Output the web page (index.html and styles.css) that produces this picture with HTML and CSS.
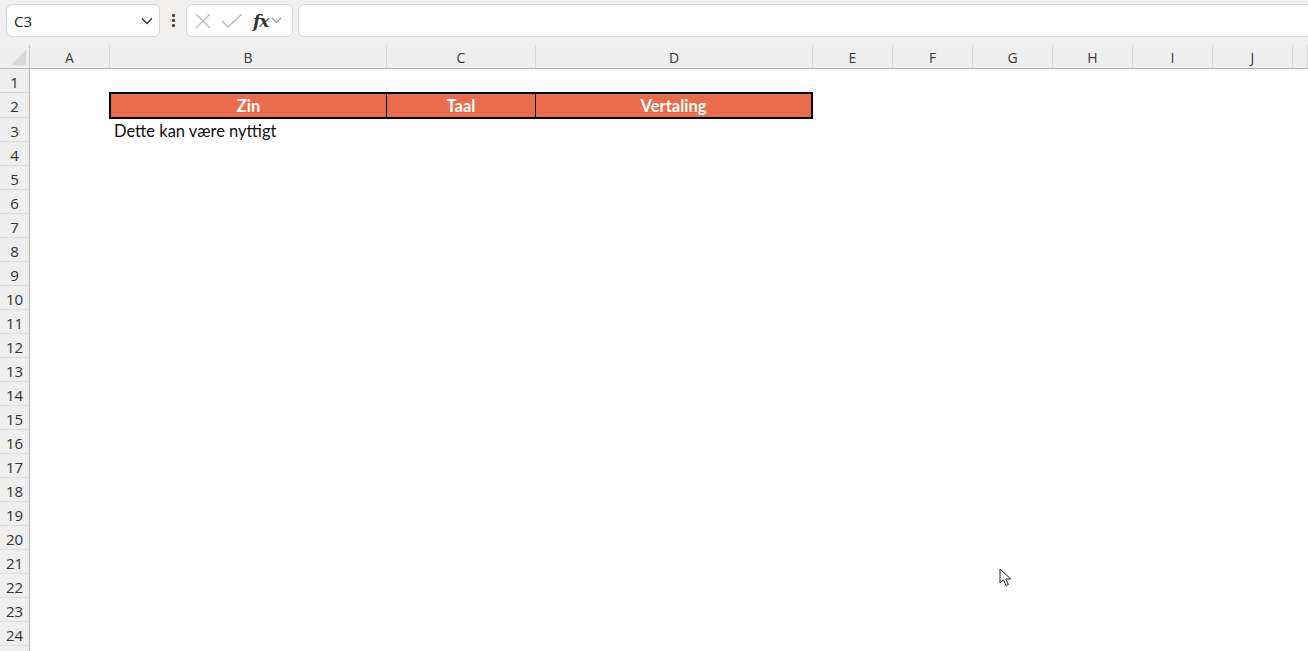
FILE: index.html
```html
<!DOCTYPE html>
<html lang="nl">
<head>
    <meta charset="UTF-8">
    <title>Blad1 - Excel</title>
    <link rel="stylesheet" href="styles.css">
</head>
<body>

<div class="formula-bar">
    <div class="name-box">
        <span>C3</span>
        <svg class="chev" width="12" height="8" viewBox="0 0 12 8"><path d="M1 1.5 L6 6.5 L11 1.5" fill="none" stroke="#333" stroke-width="1.4"/></svg>
    </div>
    <div class="dots"><i></i><i></i><i></i></div>
    <div class="fx-box">
        <svg width="18" height="18" viewBox="0 0 18 18"><path d="M2 2 L16 16 M16 2 L2 16" stroke="#bdbdbd" stroke-width="1.4"/></svg>
        <svg width="22" height="18" viewBox="0 0 22 18"><path d="M1 9 L7 15 L21 2" fill="none" stroke="#bdbdbd" stroke-width="1.4"/></svg>
        <span class="fx">fx</span>
        <svg width="11" height="7" viewBox="0 0 11 7"><path d="M1 1 L5.5 5.5 L10 1" fill="none" stroke="#9a9a9a" stroke-width="1.2"/></svg>
    </div>
    <div class="formula-input"></div>
</div>

<div class="col-heads">
    <div class="corner"><span class="tri"></span></div>
    <div class="ch w80">A</div>
    <div class="ch w277">B</div>
    <div class="ch w149">C</div>
    <div class="ch w277">D</div>
    <div class="ch w80">E</div>
    <div class="ch w80">F</div>
    <div class="ch w80">G</div>
    <div class="ch w80">H</div>
    <div class="ch w80">I</div>
    <div class="ch w80">J</div>
    <div class="ch rest"></div>
</div>

<div class="sheet">
    <div class="row-heads">
        <div class="rh">1</div>
        <div class="rh tall">2</div>
        <div class="rh">3</div>
        <div class="rh">4</div>
        <div class="rh">5</div>
        <div class="rh">6</div>
        <div class="rh">7</div>
        <div class="rh">8</div>
        <div class="rh">9</div>
        <div class="rh">10</div>
        <div class="rh">11</div>
        <div class="rh">12</div>
        <div class="rh">13</div>
        <div class="rh">14</div>
        <div class="rh">15</div>
        <div class="rh">16</div>
        <div class="rh">17</div>
        <div class="rh">18</div>
        <div class="rh">19</div>
        <div class="rh">20</div>
        <div class="rh">21</div>
        <div class="rh">22</div>
        <div class="rh">23</div>
        <div class="rh">24</div>
        <div class="rh"></div>
    </div>

    <div class="cells">
        <div class="tbl-head">
            <div class="th c-zin">Zin</div>
            <div class="th c-taal">Taal</div>
            <div class="th c-vert">Vertaling</div>
        </div>
        <div class="cell-text">Dette kan være nyttigt</div>

        <svg class="cursor" width="14" height="20" viewBox="0 0 14 20">
            <path d="M1 1 L1 15 L4.5 11.8 L7 17.5 L9.3 16.5 L6.9 11 L11.8 11 Z" fill="#fff" stroke="#222" stroke-width="1" stroke-linejoin="round"/>
        </svg>
    </div>
</div>

</body>
</html>
```

FILE: styles.css
```css
* {
    box-sizing: border-box;
}
body {
    margin: 0;
    background-color: #fff;
    font-family: "Open Sans", "Noto Sans", sans-serif;
    color: #222;
    overflow: hidden;
    height: 651px;
}

/* formula bar */
.formula-bar {
    display: flex;
    align-items: center;
    height: 45px;
    padding: 4px 0 8px 6px;
    background-color: #f1f0ef;
}
.name-box {
    display: flex;
    align-items: center;
    justify-content: space-between;
    width: 154px;
    height: 33px;
    padding: 0 6px 0 7px;
    background-color: #fff;
    border: 1px solid #d6d6d6;
    border-radius: 6px;
    font-size: 15px;
    color: #262626;
}
.dots {
    display: flex;
    flex-direction: column;
    gap: 2px;
    width: 26px;
    align-items: center;
}
.dots i {
    display: block;
    width: 3px;
    height: 3px;
    background-color: #444;
    border-radius: 1px;
}
.fx-box {
    display: flex;
    align-items: center;
    gap: 9px;
    width: 107px;
    height: 33px;
    padding: 0 0 0 7px;
    background-color: #fff;
    border: 1px solid #d6d6d6;
    border-radius: 6px;
}
.fx-box .fx {
    font-family: "DejaVu Serif", "Liberation Serif", serif;
    font-style: italic;
    font-weight: bold;
    font-size: 17px;
    color: #333;
    margin-left: 1px;
    margin-right: -6px;
    letter-spacing: -1px;
}
.formula-input {
    flex: 1;
    height: 33px;
    margin-left: 5px;
    margin-right: -8px;
    background-color: #fff;
    border: 1px solid #d6d6d6;
    border-radius: 6px;
}

/* column headers */
.col-heads {
    display: flex;
    height: 24px;
    background-color: #efefef;
    border-bottom: 1px solid #b4b4b4;
}
.corner {
    position: relative;
    width: 30px;
    border-right: 1px solid #c8c8c8;
}
.corner .tri {
    position: absolute;
    right: 3px;
    bottom: 3px;
    width: 0;
    height: 0;
    border-left: 15px solid transparent;
    border-bottom: 15px solid #d8d8d8;
}
.ch {
    display: flex;
    align-items: center;
    justify-content: center;
    font-size: 14px;
    color: #3a3a3a;
    border-right: 1px solid #d8d8d8;
    padding-top: 1px;
}
.w80 { width: 80px; }
.w149 { width: 149px; }
.w277 { width: 277px; }
.rest {
    flex: 1;
}

/* sheet body */
.sheet {
    display: flex;
}
.row-heads {
    width: 30px;
    background-color: #efefef;
    border-right: 1px solid #b4b4b4;
}
.rh {
    height: 24px;
    display: flex;
    align-items: center;
    justify-content: center;
    font-size: 15px;
    color: #333;
    border-bottom: 1px solid #dadada;
    padding-top: 2px;
}
.rh.tall {
    height: 25px;
}

.cells {
    position: relative;
    flex: 1;
    padding: 23px 0 0 79px;
}
.tbl-head {
    display: flex;
    width: 704px;
    height: 27px;
    border: 2px solid #000;
    background-color: #e96d4a;
}
.th {
    display: flex;
    align-items: center;
    justify-content: center;
    color: #fff;
    font-family: Lato, "Open Sans", sans-serif;
    font-weight: bold;
    font-size: 16.5px;
    padding-top: 1px;
}
.c-zin {
    width: 276px;
    border-right: 1px solid #000;
}
.c-taal {
    width: 149px;
    border-right: 1px solid #000;
}
.c-vert {
    width: 275px;
}
.cell-text {
    height: 24px;
    line-height: 24px;
    padding-left: 84px;
    margin-left: -79px;
    font-family: Lato, "Open Sans", sans-serif;
    font-size: 16.5px;
    color: #111;
}

.cursor {
    position: absolute;
    left: 969px;
    top: 499px;
}
```
